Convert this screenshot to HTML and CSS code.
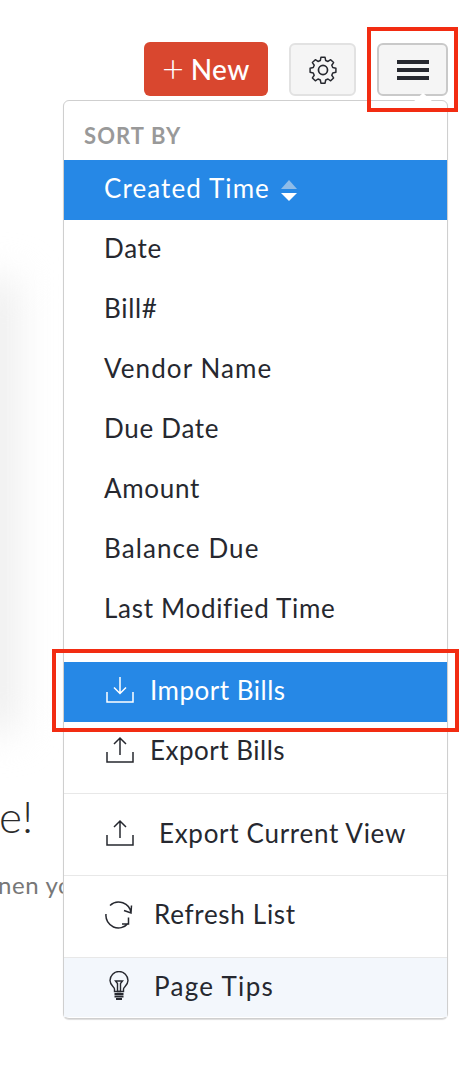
FILE: index.html
```html
<!DOCTYPE html>
<html lang="en">
<head>
  <meta charset="UTF-8">
  <title>Bills</title>
  <link rel="stylesheet" href="styles.css">
</head>
<body>
  <div class="page">
    <div class="side-shade"></div>

    <div class="toolbar">
      <button class="btn-new"><span class="plus">+</span> New</button>
      <button class="btn-tool btn-gear">
        <svg width="34" height="34" viewBox="0 0 24 24" fill="none" stroke="#26282f" stroke-width="1.2" stroke-linejoin="round">
          <circle cx="12" cy="12" r="3.200"/>
          <path d="M10.300 2.800h3.400l.5 2.600 1.900.8 2.200-1.500 2.400 2.400-1.500 2.200.8 1.900 2.600.5v3.400l-2.600.5-.8 1.900 1.500 2.200-2.400 2.400-2.200-1.500-1.900.8-.5 2.600h-3.400l-.5-2.600-1.900-.8-2.200 1.500-2.400-2.400 1.500-2.200-.8-1.900-2.600-.5v-3.400l2.600-.5.8-1.900-1.500-2.200 2.400-2.400 2.200 1.500 1.900-.8z" transform="translate(12 12) scale(.86) translate(-12 -13.200)"/>
        </svg>
      </button>
      <button class="btn-tool btn-menu">
        <span class="bar"></span><span class="bar"></span><span class="bar"></span>
      </button>
    </div>

    <div class="empty">
      <div class="empty-title">e!</div>
      <div class="empty-sub">nen you</div>
    </div>

    <div class="menu">
      <div class="menu-notch"></div>
      <div class="menu-label">SORT BY</div>
      <ul class="sort-list">
        <li class="sort-item active wide">Created Time
          <span class="sort-arrows"><span class="arrow-up"></span><span class="arrow-down"></span></span>
        </li>
        <li class="sort-item">Date</li>
        <li class="sort-item">Bill#</li>
        <li class="sort-item wide">Vendor Name</li>
        <li class="sort-item">Due Date</li>
        <li class="sort-item">Amount</li>
        <li class="sort-item wide">Balance Due</li>
        <li class="sort-item">Last Modified Time</li>
      </ul>

      <div class="action import">
        <svg class="icon" width="28" height="28" viewBox="0 0 28 28" fill="none" stroke="#fff" stroke-width="1.500">
          <path d="M14 1v16.500M8 11.500 14 17.500l6-6M1 16v10h26v-10"/>
        </svg>
        <span>Import Bills</span>
      </div>
      <div class="action export">
        <svg class="icon" width="28" height="28" viewBox="0 0 28 28" fill="none" stroke="#26282f" stroke-width="1.500">
          <path d="M14 19V2M8 8 14 2l6 6M1 16v10h26v-10"/>
        </svg>
        <span>Export Bills</span>
      </div>
      <div class="action current">
        <svg class="icon" width="28" height="28" viewBox="0 0 28 28" fill="none" stroke="#26282f" stroke-width="1.500">
          <path d="M14 19V2M8 8 14 2l6 6M1 16v10h26v-10"/>
        </svg>
        <span>Export Current View</span>
      </div>
      <div class="action refresh">
        <svg class="icon" width="30" height="30" viewBox="0 0 30 30" fill="none" stroke="#26282f" stroke-width="1.500">
          <path d="M6 6.500A12.500 12.500 0 0 1 27 14M27.500 6.500 27 14 20 11.500"/>
          <path d="M2 15A12.500 12.500 0 0 0 24 24.500M24.500 18.500 24.500 25 18 25"/>
        </svg>
        <span>Refresh List</span>
      </div>
      <div class="action tips">
        <svg class="icon" width="22" height="30" viewBox="0 0 22 30" fill="none" stroke="#26282f" stroke-width="1.400">
          <path d="M6.500 20.500v-2.500c0-2-4.500-4-4.500-8.500a9 9 0 0 1 18 0c0 4.500-4.500 6.500-4.500 8.500v2.500z"/>
          <path d="M7.500 10h7l-2 2.500v8h-3v-8z"/>
          <path d="M6.500 23h9M6.500 25.500h9M8 28h6" stroke-width="1.800"/>
        </svg>
        <span>Page Tips</span>
      </div>
    </div>

    <div class="mark mark-menu"></div>
    <div class="mark mark-import"></div>
  </div>
</body>
</html>
```

FILE: styles.css
```css
* { box-sizing: border-box; }
html, body { margin: 0; padding: 0; background: #fff; }
body { font-family: "Lato", "Liberation Sans", sans-serif; color: #26282f; }
ul { list-style: none; margin: 0; padding: 0; }
button { font-family: inherit; padding: 0; }

.page { position: relative; width: 466px; height: 1072px; overflow: hidden; background: #fff; }
.side-shade { position: absolute; left: -40px; top: 280px; width: 58px; height: 450px; background: #eee; filter: blur(20px); }

.toolbar { position: relative; display: flex; justify-content: flex-end; align-items: flex-start; gap: 21px; padding: 42px 18px 0 0; }
.btn-new { width: 124px; height: 54px; border: 0; border-radius: 6px; background: #d9472f; color: #fff; font-size: 28px; letter-spacing: .5px; font-weight: 500; display: flex; align-items: center; justify-content: center; gap: 6px; }
.plus { font-size: 38px; font-weight: 300; line-height: 1; margin-top: -4px; }
.btn-tool { display: flex; align-items: center; justify-content: center; height: 53px; margin-top: 1px; background: #f5f5f5; border: 2px solid #e2e2e2; border-radius: 6px; }
.btn-gear { width: 67px; }
.btn-menu { width: 71px; flex-direction: column; gap: 4px; border-color: #c9c9c9; }
.bar { display: block; width: 32px; height: 4px; background: #26282f; }

.empty { position: relative; padding-top: 696px; overflow: hidden; white-space: nowrap; }
.empty-title { font-size: 44px; font-weight: 300; line-height: 48px; margin-left: -1px; color: #2b2b2b; }
.empty-sub { font-size: 24px; line-height: 30px; margin-top: 30px; margin-left: -2px; letter-spacing: .6px; color: #777; }

.menu { position: absolute; left: 63px; top: 100px; width: 385px; height: 919px; background: #fff; border: 1px solid #cfcfcf; border-radius: 6px; box-shadow: 0 1px 1px #ddd; font-size: 26px; letter-spacing: .7px; }
.menu-notch { position: absolute; right: 14px; top: -8px; width: 0; height: 0; border-left: 10px solid transparent; border-right: 10px solid transparent; border-bottom: 9px solid #fff; }
.menu-label { height: 59px; padding: 22px 0 0 20px; font-size: 22px; font-weight: 700; line-height: 26px; letter-spacing: 1.1px; color: #999; }

.sort-item { display: flex; align-items: center; height: 60px; padding: 0 0 4px 40px; }
.sort-item.wide { letter-spacing: 1.1px; }
.sort-item.active { background: #2688e6; color: #fff; }
.sort-arrows { display: flex; flex-direction: column; gap: 4px; margin-left: 11px; padding-top: 4px; }
.arrow-up, .arrow-down { width: 0; height: 0; border-left: 8px solid transparent; border-right: 8px solid transparent; }
.arrow-up { border-bottom: 9px solid #8fbce8; }
.arrow-down { border-top: 8px solid #fff; }

.action { display: flex; align-items: center; padding-left: 42px; }
.action .icon { flex: none; }
.import { height: 60px; margin-top: 22px; padding-bottom: 4px; background: #2688e6; color: #fff; gap: 16px; letter-spacing: .5px; }
.export { height: 72px; padding-bottom: 16px; gap: 16px; letter-spacing: .5px; border-bottom: 1px solid #e8e8e8; }
.current { height: 82px; padding-bottom: 4px; gap: 25px; border-bottom: 1px solid #e8e8e8; }
.refresh { height: 81px; gap: 20px; padding-left: 40px; padding-bottom: 6px; }
.tips { height: 60px; padding-bottom: 4px; background: #f3f7fc; border-top: 1px solid #e8e8e8; gap: 24px; padding-left: 44px; letter-spacing: 1.3px; }

.mark { position: absolute; border: 4px solid #f22c12; }
.mark-menu { left: 367px; top: 27px; width: 91px; height: 85px; }
.mark-import { left: 52px; top: 649px; width: 407px; height: 83px; }
```
